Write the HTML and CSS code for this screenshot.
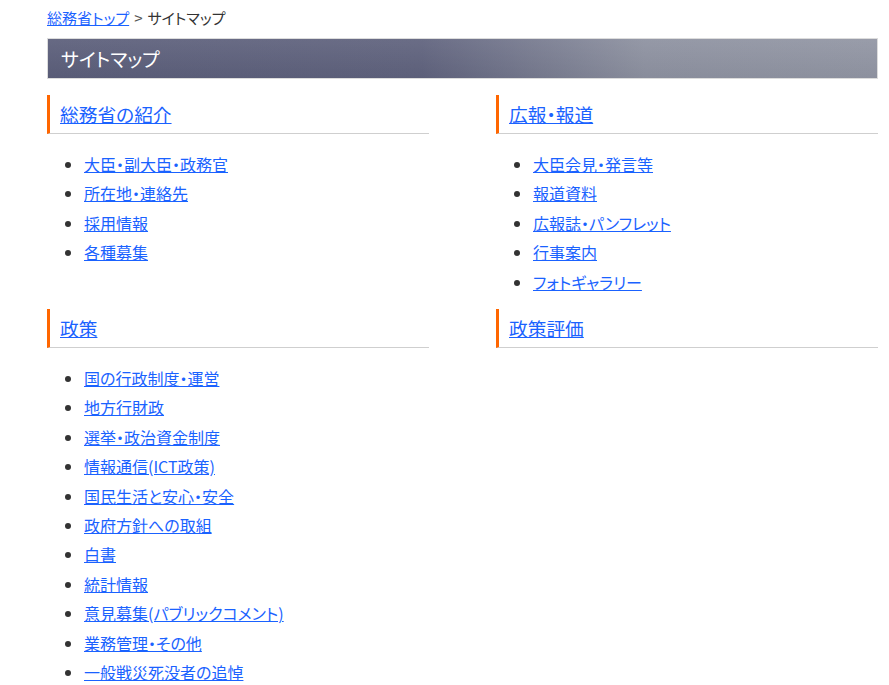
FILE: index.html
```html
<!DOCTYPE html>
<html lang="ja">
<head>
    <meta charset="UTF-8">
    <title>サイトマップ</title>
    <link rel="stylesheet" href="styles.css">
</head>
<body>
<div class="page">
    <p class="crumb"><a href="#">総務省トップ</a><span class="sep">&gt;</span>サイトマップ</p>
    <h2 class="title">サイトマップ</h2>
    <div class="map">
        <div class="sec">
            <h3><a href="#">総務省の紹介</a></h3>
            <ul>
                <li><a href="#">大臣・副大臣・政務官</a></li>
                <li><a href="#">所在地・連絡先</a></li>
                <li><a href="#">採用情報</a></li>
                <li><a href="#">各種募集</a></li>
            </ul>
        </div>
        <div class="sec">
            <h3><a href="#">広報・報道</a></h3>
            <ul>
                <li><a href="#">大臣会見・発言等</a></li>
                <li><a href="#">報道資料</a></li>
                <li><a href="#">広報誌・パンフレット</a></li>
                <li><a href="#">行事案内</a></li>
                <li><a href="#">フォトギャラリー</a></li>
            </ul>
        </div>
        <div class="sec">
            <h3><a href="#">政策</a></h3>
            <ul>
                <li><a href="#">国の行政制度・運営</a></li>
                <li><a href="#">地方行財政</a></li>
                <li><a href="#">選挙・政治資金制度</a></li>
                <li><a href="#">情報通信(ICT政策)</a></li>
                <li><a href="#">国民生活と安心・安全</a></li>
                <li><a href="#">政府方針への取組</a></li>
                <li><a href="#">白書</a></li>
                <li><a href="#">統計情報</a></li>
                <li><a href="#">意見募集(パブリックコメント)</a></li>
                <li><a href="#">業務管理・その他</a></li>
                <li><a href="#">一般戦災死没者の追悼</a></li>
            </ul>
        </div>
        <div class="sec">
            <h3><a href="#">政策評価</a></h3>
        </div>
    </div>
</div>
</body>
</html>
```

FILE: styles.css
```css
* {
    margin: 0;
    padding: 0;
}

body {
    font-family: "Noto Sans CJK JP", "Liberation Sans", sans-serif;
    font-feature-settings: "palt";
    color: #333;
    background: #fff;
}

a {
    color: #1a62ff;
}

.page {
    width: 831px;
    padding: 8px 0 0 47px;
}

.crumb {
    font-size: 15px;
    line-height: 20px;
}

.crumb .sep {
    margin: 0 5px;
    color: #555;
}

.title {
    margin-top: 10px;
    height: 39px;
    line-height: 39px;
    padding-left: 13px;
    border: 1px solid #dcdcdc;
    font-size: 19px;
    font-weight: normal;
    color: #fff;
    background: linear-gradient(to bottom, rgba(255, 255, 255, 0.07), rgba(0, 0, 0, 0.03)),
                linear-gradient(to right, #5b5e7a 0%, #5f627d 45%, #8d91a0 72%, #9195a3 100%);
}

.map {
    display: grid;
    grid-template-columns: 382px 382px;
    column-gap: 67px;
    margin-top: 16px;
}

.sec {
    margin-bottom: 12px;
}

.sec h3 {
    height: 38px;
    line-height: 38px;
    padding-left: 10px;
    border-left: 3px solid #ff6600;
    border-bottom: 1px solid #cfcfcf;
    font-size: 18.72px;
    font-weight: normal;
}

.sec ul {
    margin-top: 16px;
    padding-left: 37px;
}

.sec li {
    font-size: 16px;
    line-height: 29.4px;
}
```
